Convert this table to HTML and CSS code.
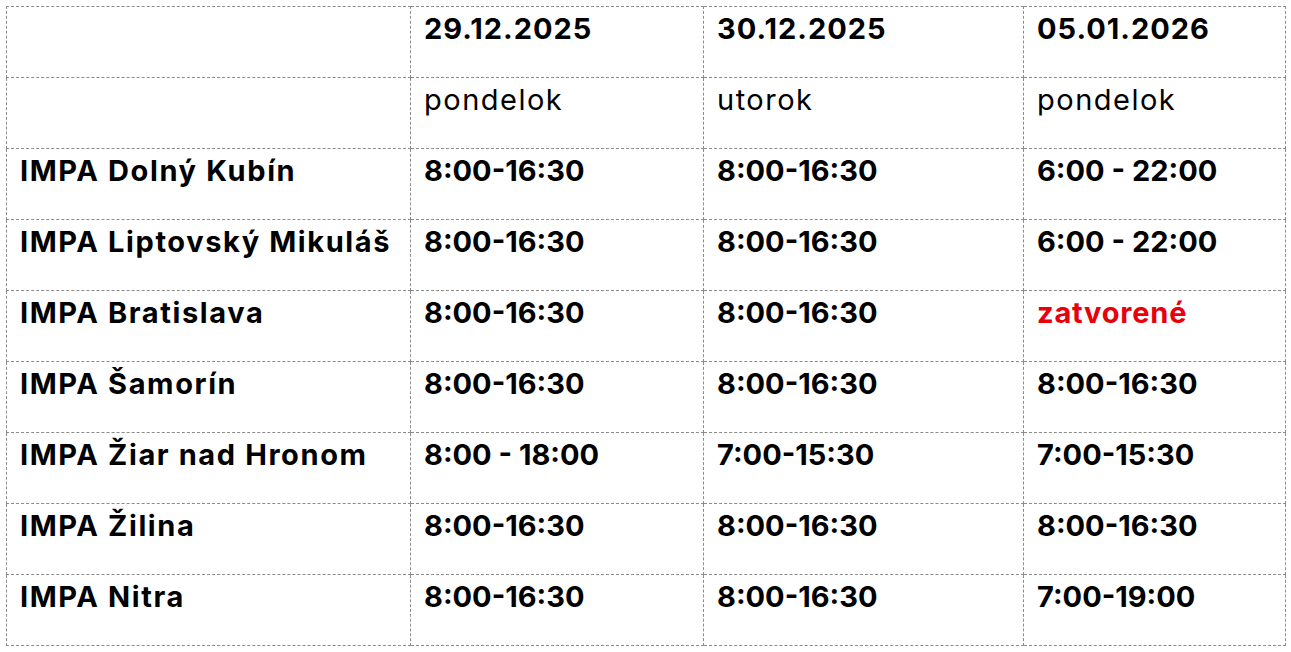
FILE: index.html
```html
<!DOCTYPE html>
<html lang="sk">
<head>
<meta charset="utf-8">
<title>Otváracie hodiny</title>
<link rel="stylesheet" href="styles.css">
</head>
<body>
<table class="hours">
  <colgroup>
    <col class="c1"><col class="c2"><col class="c3"><col class="c4">
  </colgroup>
  <tr><td></td><td class="date">29.12.2025</td><td class="date">30.12.2025</td><td class="date">05.01.2026</td></tr>
  <tr><td></td><td class="day">pondelok</td><td class="day">utorok</td><td class="day">pondelok</td></tr>
  <tr><td class="name">IMPA Dolný Kubín</td><td class="time">8:00-16:30</td><td class="time">8:00-16:30</td><td class="time">6:00 - 22:00</td></tr>
  <tr><td class="name">IMPA Liptovský Mikuláš</td><td class="time">8:00-16:30</td><td class="time">8:00-16:30</td><td class="time">6:00 - 22:00</td></tr>
  <tr><td class="name">IMPA Bratislava</td><td class="time">8:00-16:30</td><td class="time">8:00-16:30</td><td class="closed">zatvorené</td></tr>
  <tr><td class="name">IMPA Šamorín</td><td class="time">8:00-16:30</td><td class="time">8:00-16:30</td><td class="time">8:00-16:30</td></tr>
  <tr><td class="name">IMPA Žiar nad Hronom</td><td class="time">8:00 - 18:00</td><td class="time">7:00-15:30</td><td class="time">7:00-15:30</td></tr>
  <tr><td class="name">IMPA Žilina</td><td class="time">8:00-16:30</td><td class="time">8:00-16:30</td><td class="time">8:00-16:30</td></tr>
  <tr><td class="name">IMPA Nitra</td><td class="time">8:00-16:30</td><td class="time">8:00-16:30</td><td class="time">7:00-19:00</td></tr>
</table>
</body>
</html>
```
FILE: styles.css
```css
html, body { margin: 0; background: #fff; }
body { padding: 6px; }
.hours {
  border-collapse: collapse;
  table-layout: fixed;
  width: 1280px;
  font-family: Inter, "Open Sans", sans-serif;
  font-size: 29px;
  color: #000;
}
.c1 { width: 404px; }
.c2 { width: 293px; }
.c3 { width: 320px; }
.c4 { width: 262px; }
.hours td {
  border: 1px dashed #8c8c8c;
  height: 71px;
  box-sizing: border-box;
  padding: 4px 13px 0;
  vertical-align: top;
  line-height: 36px;
  white-space: nowrap;
}
.date { font-weight: 700; letter-spacing: 1px; }
.day { font-weight: 400; letter-spacing: 1.5px; }
.name { font-weight: 700; letter-spacing: 1.6px; }
.time { font-weight: 700; }
.closed { font-weight: 700; color: #e8000b; letter-spacing: 0.8px; }
```
